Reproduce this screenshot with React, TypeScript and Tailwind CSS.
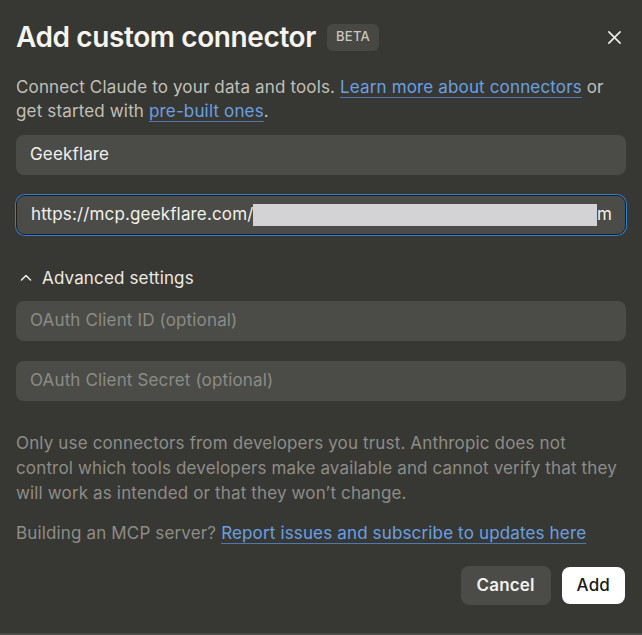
import React from "react";

export default function App() {
  const font = { fontFamily: "Inter, 'Noto Sans', sans-serif" };
  const link = "text-[#6aa0e3] underline decoration-[#4f79ad] underline-offset-[4px]";
  return (
    <div
      className="w-[642px] h-[635px] bg-[#373733] border-b-2 border-[#4b4b48] overflow-hidden flex flex-col px-4 tracking-[0.15px]"
      style={font}
    >
      <div className="flex items-center pt-[19px] h-[55px]">
        <h1 className="text-[28px] font-semibold text-[#f5f4ef] tracking-[-0.4px] leading-none">
          Add custom connector
        </h1>
        <span className="ml-[11px] px-[9px] h-[27px] flex items-center rounded-[6px] bg-[#474743] text-[#c9c7bf] text-[13px] font-medium tracking-[0.3px]">
          BETA
        </span>
        <button className="ml-auto mr-[4px] text-[#eceae4]">
          <svg width="15" height="15" viewBox="0 0 16 16" fill="none" stroke="currentColor" strokeWidth="1.8" strokeLinecap="round">
            <path d="M2 2 L14 14 M14 2 L2 14" />
          </svg>
        </button>
      </div>
      <p className="mt-[20px] text-[17px] leading-[24px] text-[#c2c0b8]">
        Connect Claude to your data and tools.{" "}
        <a className={link}>Learn more about connectors</a> or get started with{" "}
        <a className={link}>pre-built ones</a>.
      </p>
      <div className="mt-[12px] h-[40px] rounded-[8px] bg-[#4b4b48] flex items-center px-[14px] text-[17px] text-[#f2f1ec]">
        Geekflare
      </div>
      <div className="mt-[20px] h-[40px] rounded-[9px] bg-[#4b4b48] border border-[#1e1e1c] ring-1 ring-[#2f7fd6] flex items-center pl-[14px] pr-[13px] text-[17px] text-[#f2f1ec] overflow-hidden whitespace-nowrap">
        <span className="shrink-0">https://mcp.geekflare.com/</span>
        <span className="h-[22px] flex-1 min-w-0 bg-[#d3d3d5]" />
        <span className="shrink-0">m</span>
      </div>
      <div className="mt-[31px] h-[24px] flex items-center gap-[9px] text-[17px] leading-[24px] text-[#eceae4]">
        <svg width="14" height="14" viewBox="0 0 14 14" fill="none" stroke="currentColor" strokeWidth="1.6" strokeLinecap="round" strokeLinejoin="round" className="ml-[3px]">
          <path d="M2.5 9 L7 4.5 L11.5 9" />
        </svg>
        <span>Advanced settings</span>
      </div>
      <div className="mt-[11px] h-[40px] rounded-[8px] bg-[#4b4b48] flex items-center px-[14px] text-[17px] text-[#8c8b86]">
        OAuth Client ID (optional)
      </div>
      <div className="mt-[20px] h-[40px] rounded-[8px] bg-[#4b4b48] flex items-center px-[14px] text-[17px] text-[#8c8b86]">
        OAuth Client Secret (optional)
      </div>
      <p className="mt-[30px] text-[17px] leading-[25px] text-[#8e8d88]">
        Only use connectors from developers you trust. Anthropic does not control which tools developers make available and cannot verify that they will work as intended or that they won’t change.
      </p>
      <p className="mt-[15px] text-[17px] leading-[25px] text-[#8e8d88]">
        Building an MCP server?{" "}
        <a className={link}>Report issues and subscribe to updates here</a>
      </p>
      <div className="mt-[20px] flex justify-end gap-[11px] pr-[1px]">
        <button className="h-[39px] px-[16px] rounded-[8px] bg-[#4b4b48] text-[#f2f1ec] text-[17px] font-semibold">
          Cancel
        </button>
        <button className="h-[37px] mt-[1px] px-[15px] rounded-[8px] bg-white text-[#1a1a18] text-[17px] font-medium">
          Add
        </button>
      </div>
    </div>
  );
}
